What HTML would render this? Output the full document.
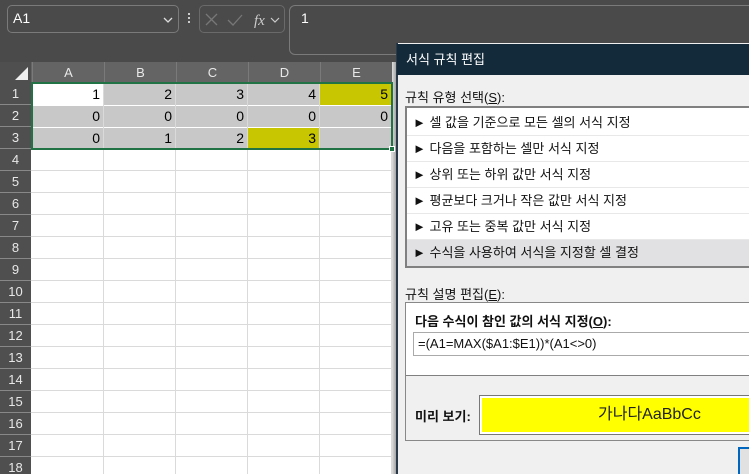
<!DOCTYPE html>
<html><head><meta charset="utf-8"><style>
*{box-sizing:border-box;margin:0;padding:0}
html,body{width:749px;height:474px;overflow:hidden}
body{background:#4a4a4a;font-family:"Liberation Sans","Malgun Gothic","Noto Sans CJK KR",sans-serif;position:relative}
.a{position:absolute}
.t{font-size:13px;color:#111}
</style></head><body>
<div class="a" style="left:7px;top:5px;width:172px;height:28px;border:1px solid #7a7a7a;border-radius:5px"></div>
<div class="a" style="left:13px;top:10px;color:#fff;font-size:14px">A1</div>
<svg class="a" style="left:162px;top:15px" width="12" height="10"><path d="M2 3 L6 7 L10 3" stroke="#ddd" fill="none" stroke-width="1.3"/></svg>
<div class="a" style="left:188px;top:13px;width:2px;height:2px;background:#ccc;box-shadow:0 4px #ccc,0 8px #ccc"></div>
<div class="a" style="left:199px;top:5px;width:86px;height:28px;border:1px solid #6a6a6a;border-radius:5px"></div>
<svg class="a" style="left:204px;top:11px" width="80" height="18"><path d="M2 3 L13 14 M13 3 L2 14" stroke="#777" stroke-width="1.3"/><path d="M24 9 L29 14 L38 4" stroke="#777" fill="none" stroke-width="1.3"/><text x="50" y="14" font-family="Liberation Serif" font-style="italic" font-size="15" fill="#ccc">fx</text><path d="M67 7 L71 11 L75 7" stroke="#ccc" fill="none" stroke-width="1.2"/></svg>
<div class="a" style="left:289px;top:5px;width:480px;height:50px;border:1px solid #7a7a7a;border-radius:6px"></div>
<div class="a" style="left:301px;top:10px;color:#fff;font-size:14px">1</div>
<div class="a" style="left:0;top:62px;width:31px;height:21px;background:#4f4f4f"></div>
<svg class="a" style="left:14px;top:66px" width="16" height="16"><path d="M14 1 L14 14 L1 14 Z" fill="#f0f0f0"/></svg>
<div class="a" style="left:31px;top:62px;width:362px;height:21px;background:#646464"></div>
<div class="a" style="left:0;top:83px;width:31px;height:391px;background:#4f4f4f"></div>
<div class="a" style="left:31px;top:83px;width:362px;height:391px;background:#fff"></div>
<div class="a" style="left:392px;top:62px;width:6px;height:412px;background:linear-gradient(90deg,#ddd,#888)"></div>
<div id="g"></div>
<script>
var h='';var cols=['A','B','C','D','E'];
for(var i=0;i<5;i++){var x=32+i*72;h+='<div class="a" style="left:'+x+'px;top:62px;width:72px;height:21px;color:#e8e8e8;font-size:13px;text-align:center;line-height:21px;border-left:1px solid #7a7a7a">'+cols[i]+'</div>';
h+='<div class="a" style="left:'+(x+71)+'px;top:83px;width:1px;height:391px;background:#dadada"></div>';}
for(var r=0;r<18;r++){var y=83+r*22;h+='<div class="a" style="left:0;top:'+y+'px;width:31px;height:22px;color:#e8e8e8;font-size:13px;text-align:center;line-height:22px;border-bottom:1px solid #888">'+(r+1)+'</div>';
h+='<div class="a" style="left:31px;top:'+(y+21)+'px;width:362px;height:1px;background:#dadada"></div>';}
var d=[[1,2,3,4,5],[0,0,0,0,0],[0,1,2,3,'']];
for(var r=0;r<3;r++)for(var c=0;c<5;c++){var bg='#c8c8c8';if(r==0&&c==0)bg='#fff';if((r==0&&c==4)||(r==2&&c==3))bg='#c8c600';
h+='<div class="a" style="left:'+(32+c*72)+'px;top:'+(84+r*22)+'px;width:71px;height:21px;background:'+bg+';font-size:14px;text-align:right;padding-right:3px;line-height:21px;color:#000">'+d[r][c]+'</div>';}
document.getElementById('g').innerHTML=h;
</script>
<div class="a" style="left:31px;top:82px;width:362px;height:68px;border:2px solid #217346"></div>
<div class="a" style="left:389px;top:146px;width:6px;height:6px;background:#217346;border:1px solid #fff"></div>
<div class="a" style="left:396px;top:43px;width:353px;height:431px;background:#f0f0f0;border-left:2px solid #2a3a48"></div>
<div class="a" style="left:397px;top:44px;width:352px;height:31px;background:#132a3a;color:#fff;font-size:13px;line-height:31px;padding-left:9px">서식 규칙 편집</div>
<div class="a t" style="left:405px;top:87px">규칙 유형 선택(<u>S</u>):</div>
<div class="a" style="left:405px;top:106px;width:350px;height:162px;border:2px solid #808080;background:#fff"></div>
<div class="a t" style="left:407px;top:110px;width:342px">
<div style="height:26px;line-height:26px;padding-left:6px;border-bottom:1px solid #e8e8e8">► 셀 값을 기준으로 모든 셀의 서식 지정</div>
<div style="height:26px;line-height:26px;padding-left:6px;border-bottom:1px solid #e8e8e8">► 다음을 포함하는 셀만 서식 지정</div>
<div style="height:26px;line-height:26px;padding-left:6px;border-bottom:1px solid #e8e8e8">► 상위 또는 하위 값만 서식 지정</div>
<div style="height:26px;line-height:26px;padding-left:6px;border-bottom:1px solid #e8e8e8">► 평균보다 크거나 작은 값만 서식 지정</div>
<div style="height:26px;line-height:26px;padding-left:6px;border-bottom:1px solid #e8e8e8">► 고유 또는 중복 값만 서식 지정</div>
<div style="height:26px;line-height:26px;padding-left:6px;background:#e1e1e4">► 수식을 사용하여 서식을 지정할 셀 결정</div>
</div>
<div class="a t" style="left:405px;top:284px">규칙 설명 편집(<u>E</u>):</div>
<div class="a" style="left:405px;top:302px;width:350px;height:139px;border:1px solid #888;background:#fff"></div>
<div class="a" style="left:406px;top:375px;width:344px;height:65px;background:#f0f0f0;border-top:1px solid #808080"></div>
<div class="a t" style="left:415px;top:311px;font-weight:bold">다음 수식이 참인 값의 서식 지정(<u>O</u>):</div>
<div class="a" style="left:413px;top:332px;width:340px;height:24px;border:1px solid #aaa;background:#fff;font-size:13px;line-height:22px;padding-left:4px;color:#111">=(A1=MAX($A1:$E1))*(A1&lt;&gt;0)</div>
<div class="a t" style="left:415px;top:406px;font-weight:bold">미리 보기:</div>
<div class="a" style="left:479px;top:395px;width:280px;height:40px;border:1px solid #777;background:#fff;padding:2px"><div style="background:#ff0;height:34px;font-size:16px;line-height:34px;padding-left:116px;color:#222">가나다AaBbCc</div></div>
<div class="a" style="left:738px;top:447px;width:20px;height:30px;border:2px solid #0067c0;background:#e1e1e1"></div>
</body></html>
